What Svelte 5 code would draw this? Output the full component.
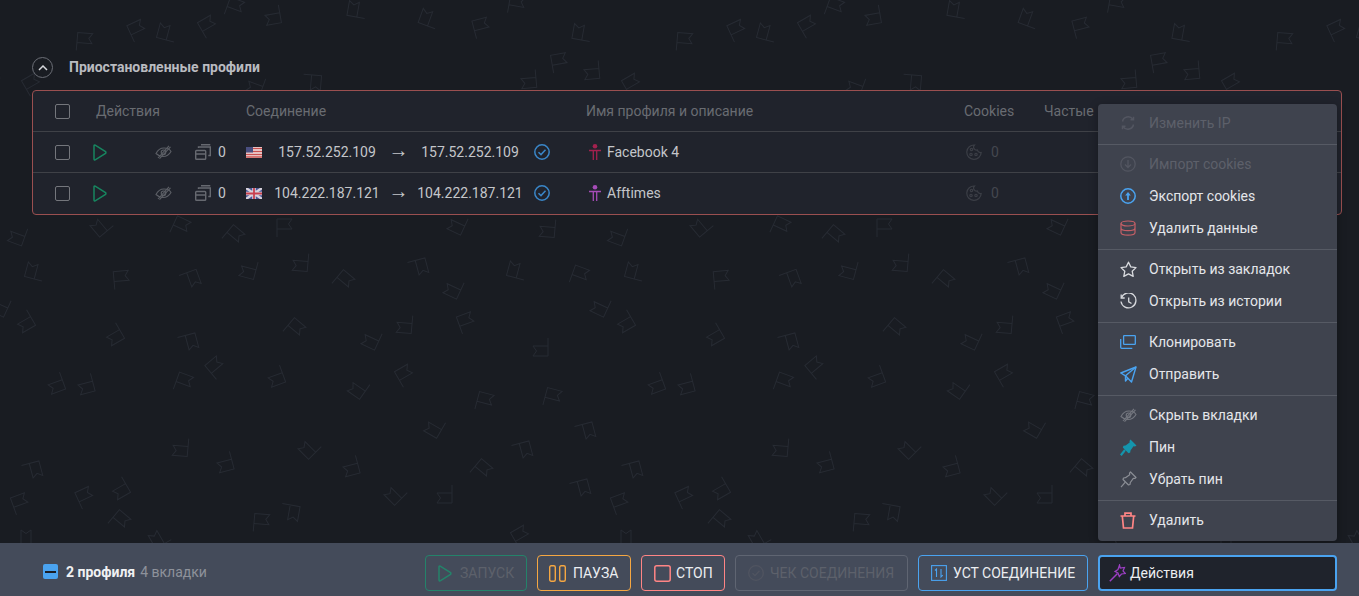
<script lang="ts">
	// background flags: one 600px wide tile, [x, y, rotation]
	const tile = [
		[458,224,205],[548,228,185],[618,235,200],[702,226,230],[780,227,25],[833,236,40],[884,228,0],
		[301,262,185],[418,267,75],[343,281,40],[454,288,205],[517,271,285],[579,276,20],[635,272,285],
		[721,280,-5],[790,279,70],[849,269,195],[601,306,205],[625,321,150],[294,329,40],[405,324,185],
		[466,323,-20],[372,339,205],[541,347,180],[714,334,150],[788,342,75],[816,368,320],[876,376,160],
		[783,383,20],[656,383,160],[686,384,165],[405,376,-30],[359,388,215],[484,402,15],[552,398,15],
		[435,427,210],[585,431,75],[310,448,225],[522,450,75],[351,466,165],[481,470,40],[632,470,75],
		[781,447,185],[825,462,165],[396,494,225],[445,494,180],[580,488,75],[620,504,-20],[685,498,-25],
		[720,488,150],[719,521,40],[861,523,5],[890,512,100],[521,537,-30],[630,538,270],[760,538,240],
		[234,8,20],[273,15,170],[137,31,-25],[167,33,285],[208,27,-30],[84,42,5],[357,10,280],[429,19,290],
		[481,28,-15],[516,5,10],[582,33,280],[559,63,-10],[592,70,175],[529,79,175],[312,82,95],[256,85,200],[32,85,-30]
	];
	const flags = tile.flatMap(([x, y, r]) =>
		[-600, 0, 600, 1200].map((dx) => [((x % 600) + dx), y, r])
	);

	const columns = ['Действия', 'Соединение', 'Имя профиля и описание', 'Cookies', 'Частые'];

	const profiles = [
		{ country: 'us', ip: '157.52.252.109', name: 'Facebook 4', color: '#a3214e' },
		{ country: 'uk', ip: '104.222.187.121', name: 'Afftimes', color: '#a64cb8' }
	];

	const menu = [
		[{ label: 'Изменить IP', icon: 'refresh', off: true }],
		[
			{ label: 'Импорт cookies', icon: 'down', off: true },
			{ label: 'Экспорт cookies', icon: 'up' },
			{ label: 'Удалить данные', icon: 'db' }
		],
		[
			{ label: 'Открыть из закладок', icon: 'star' },
			{ label: 'Открыть из истории', icon: 'history' }
		],
		[
			{ label: 'Клонировать', icon: 'clone' },
			{ label: 'Отправить', icon: 'send' }
		],
		[
			{ label: 'Скрыть вкладки', icon: 'eye' },
			{ label: 'Пин', icon: 'pin' },
			{ label: 'Убрать пин', icon: 'unpin' }
		],
		[{ label: 'Удалить', icon: 'trash' }]
	];
</script>

{#snippet eye(color)}
	<svg class="ic" width="17" height="14" viewBox="0 0 17 14" fill="none" stroke={color} stroke-width="1.100">
		<path d="M1 8.500C3 4.500 6 3 9 3s5.500 1 7 3.500C14 10 11.500 11.500 8 11.500S3 10.500 1 8.500Z" />
		<circle cx="8.500" cy="7.300" r="2.300" />
		<path d="M14 .8 3 13M15.500 1.800 4.500 13.600" />
	</svg>
{/snippet}

{#snippet menuIcon(name)}
	{#if name === 'refresh'}
		<svg class="ic" width="16" height="16" viewBox="0 0 16 16" fill="none" stroke="#535661" stroke-width="1.500">
			<path d="M2.500 6.500A5.700 5.700 0 0 1 12.800 4.300M13.500 9.500A5.700 5.700 0 0 1 3.200 11.700" />
			<path d="M13.500 1.800v3h-3M2.500 14.200v-3h3" />
		</svg>
	{:else if name === 'down'}
		<svg class="ic" width="16" height="16" viewBox="0 0 16 16" fill="none" stroke="#535661" stroke-width="1.300">
			<circle cx="8" cy="8" r="7.200" />
			<path d="M8 4v7.500M5 8.500l3 3 3-3" />
		</svg>
	{:else if name === 'up'}
		<svg class="ic" width="16" height="16" viewBox="0 0 16 16" fill="none" stroke="#4aa3f0" stroke-width="1.500">
			<circle cx="8" cy="8" r="7.200" />
			<path d="M8 12V6" stroke-width="1.800" />
			<path d="M5.200 7.500 8 4l2.800 3.500Z" fill="#4aa3f0" stroke="none" />
		</svg>
	{:else if name === 'db'}
		<svg class="ic" width="16" height="16" viewBox="0 0 16 16" fill="none" stroke="#c45f66" stroke-width="1.200">
			<ellipse cx="8" cy="3.500" rx="7" ry="2.500" />
			<path d="M1 3.500v9C1 14 4 15.200 8 15.200s7-1.200 7-2.700v-9M1 8c0 1.500 3 2.700 7 2.700S15 9.500 15 8" />
		</svg>
	{:else if name === 'star'}
		<svg class="ic" width="17" height="17" viewBox="0 0 17 17" fill="none" stroke="#d8dade" stroke-width="1.300" stroke-linejoin="round">
			<path d="M8.500 1.200 10.800 5.900 16 6.600 12.200 10.200 13.200 15.400 8.500 12.900 3.800 15.400 4.800 10.200 1 6.600 6.200 5.900Z" />
		</svg>
	{:else if name === 'history'}
		<svg class="ic" width="17" height="17" viewBox="0 0 17 17" fill="none" stroke="#d8dade" stroke-width="1.300">
			<path d="M1.500 4.500A7.500 7.500 0 1 1 1 8.500" />
			<path d="M1.200 1.500v3.500h3.500" />
			<path d="M8.700 4.500v4.300l2.800 1.700" />
		</svg>
	{:else if name === 'clone'}
		<svg class="ic" width="16" height="14" viewBox="0 0 16 14" fill="none" stroke="#4aa3f0" stroke-width="1.300">
			<rect x="3.600" y=".7" width="11.700" height="8.600" rx=".6" />
			<path d="M.7 4v8.300c0 .6.400 1 1 1h10.600" />
		</svg>
	{:else if name === 'send'}
		<svg class="ic" width="17" height="17" viewBox="0 0 17 17" fill="none" stroke="#4aa3f0" stroke-width="1.400" stroke-linejoin="round">
			<path d="M16 1 .8 7 5.500 9.800 11.500 16Z" />
			<path d="M16 1 5.500 9.800V15l2.500-3" />
		</svg>
	{:else if name === 'eye'}
		{@render eye('#74777f')}
	{:else if name === 'pin'}
		<svg class="ic" width="17" height="17" viewBox="0 0 17 17">
			<path d="M10.500.5 16.500 6.500 15 7.500 13.500 7.300 10.500 11.500 10.200 13.500 8.500 14.200 2.800 8.500 3.500 6.800 5.500 6.500 9.700 3.500 9.500 2Z" fill="#1495ad" />
			<path d="M5 11 .8 16.200" stroke="#1495ad" stroke-width="2.200" fill="none" />
		</svg>
	{:else if name === 'unpin'}
		<svg class="ic" width="17" height="17" viewBox="0 0 17 17" fill="none" stroke="#8b8e95" stroke-width="1.200" stroke-linejoin="round">
			<path d="M10.500 1 16 6.500 14.800 7.500 13.300 7.300 10.300 11.500 10 13.500 8.500 14 3 8.500 3.500 7 5.500 6.700 9.700 3.700 9.500 2.200Z" />
			<path d="M5.300 11.200 1 16.200" />
		</svg>
	{:else if name === 'trash'}
		<svg class="ic" width="16" height="17" viewBox="0 0 16 17" fill="none" stroke="#ff8585" stroke-width="1.700">
			<path d="M.5 4h15M5 4V1.200h6V4M2.300 4l1.200 12h9l1.200-12" />
		</svg>
	{/if}
{/snippet}

<div class="page">
	<svg class="pattern" width="1359" height="596" aria-hidden="true">
		<defs>
			<path id="flag" d="M-7 9V-9H8L4.500-4 8 1H-7" fill="none" stroke="#272b33" stroke-width="1" />
		</defs>
		{#each flags as [x, y, r]}
			<use href="#flag" transform="translate({x} {y}) rotate({r})" />
		{/each}
	</svg>

	<main class="content">
		<div class="section-head">
			<span class="collapse">
				<svg width="10" height="6" viewBox="0 0 10 6" fill="none" stroke="#d4d6da" stroke-width="1.500">
					<path d="M1 5l4-4 4 4" />
				</svg>
			</span>
			<span class="section-title">Приостановленные профили</span>
		</div>

		<div class="table">
			<div class="row head">
				<span class="box"></span>
				{#each columns as col}
					<span>{col}</span>
				{/each}
			</div>
			{#each profiles as p}
				<div class="row">
					<span class="box"></span>
					<div class="actions">
						<svg class="play" width="14" height="17" viewBox="0 0 14 17" fill="none" stroke="#17855f" stroke-width="1.500">
							<path d="M2.200 1.200 12.500 7.500Q13.300 8.500 12.500 9.500L2.200 15.800Q1 16.200 1 15V2Q1 .8 2.200 1.200Z" />
						</svg>
						{@render eye('#5c5f66')}
						<svg class="tabs" width="16" height="16" viewBox="0 0 16 16" fill="none" stroke="#666970" stroke-width="1.400">
							<rect x=".7" y="6.500" width="10" height="8.800" rx=".8" />
							<path d="M.7 10h10M3.500 4V3h11.800v8.500h-2M6 .8h9.300" />
						</svg>
						<span class="count">0</span>
					</div>
					<div class="conn">
						{#if p.country === 'us'}
							<svg class="flag" width="16" height="11" viewBox="0 0 16 11">
								<rect width="16" height="11" fill="#f0e6e6" />
								<path d="M0 1.500h16M0 4.500h16M0 7.500h16M0 10h16" stroke="#c9504f" stroke-width="1.500" />
								<rect width="7" height="5.500" fill="#4a4f80" />
							</svg>
						{:else}
							<svg class="flag" width="16" height="11" viewBox="0 0 16 11">
								<rect width="16" height="11" fill="#4a5596" />
								<path d="M0 0l16 11M16 0 0 11" stroke="#d8d2dc" stroke-width="2.400" />
								<path d="M8 0v11M0 5.500h16" stroke="#d8d2dc" stroke-width="3.600" />
								<path d="M8 0v11M0 5.500h16" stroke="#c8404f" stroke-width="1.800" />
							</svg>
						{/if}
						<span class="ip">{p.ip}</span>
						<span class="arrow">→</span>
						<span class="ip">{p.ip}</span>
						<svg class="check" width="16" height="16" viewBox="0 0 16 16" fill="none" stroke="#3a86c8" stroke-width="1.500">
							<circle cx="8" cy="8" r="7.200" />
							<path d="M4.500 8.200 7 10.600 11.500 5.800" />
						</svg>
					</div>
					<div class="name">
						<svg width="12" height="16" viewBox="0 0 12 16" fill="none" stroke={p.color} stroke-width="1.300">
							<circle cx="6" cy="2.300" r="2.300" fill={p.color} stroke="none" />
							<path d="M0 6.500h12M4.300 6.500V16M7.700 6.500V16" />
						</svg>
						<span>{p.name}</span>
					</div>
					<div class="cookies">
						<svg width="16" height="16" viewBox="0 0 16 16" fill="none" stroke="#3b3e46" stroke-width="1.200">
							<path d="M8.500 1A7.200 7.200 0 1 0 15.200 8.500 3 3 0 0 1 11.500 6 3 3 0 0 1 8.500 1Z" />
							<circle cx="5.500" cy="5.500" r="1.200" />
							<circle cx="5" cy="10.500" r="1.200" />
							<circle cx="10" cy="10.500" r="1.200" />
						</svg>
						<span>0</span>
					</div>
				</div>
			{/each}
		</div>
	</main>

	<div class="menu">
		{#each menu as group}
			<div class="group">
				{#each group as item}
					<div class="item" class:off={item.off}>
						<span class="slot">{@render menuIcon(item.icon)}</span>
						{item.label}
					</div>
				{/each}
			</div>
		{/each}
	</div>

	<footer class="bar">
		<div class="selected">
			<span class="minus"></span>
			<b>2 профиля</b>
			<span class="tabs-count">4 вкладки</span>
		</div>
		<div class="buttons">
			<button class="btn start">
				<svg width="14" height="17" viewBox="0 0 14 17" fill="none" stroke="#24836a" stroke-width="1.500">
					<path d="M2.200 1.200 12.500 7.500Q13.300 8.500 12.500 9.500L2.200 15.800Q1 16.200 1 15V2Q1 .8 2.200 1.200Z" />
				</svg>
				ЗАПУСК
			</button>
			<button class="btn pause">
				<svg width="17" height="17" viewBox="0 0 17 17" fill="none" stroke="#f5a742" stroke-width="1.400">
					<rect x=".7" y=".7" width="5.600" height="15.600" rx="1.500" />
					<rect x="10.700" y=".7" width="5.600" height="15.600" rx="1.500" />
				</svg>
				ПАУЗА
			</button>
			<button class="btn stop">
				<svg width="17" height="17" viewBox="0 0 17 17" fill="none" stroke="#ff8585" stroke-width="1.500">
					<rect x=".8" y=".8" width="15.400" height="15.400" rx="2" />
				</svg>
				СТОП
			</button>
			<button class="btn check-conn">
				<svg width="16" height="16" viewBox="0 0 16 16" fill="none" stroke="#505460" stroke-width="1.300">
					<circle cx="8" cy="8" r="7.300" />
					<path d="M4.500 8.200 7 10.600 11.500 5.800" />
				</svg>
				ЧЕК СОЕДИНЕНИЯ
			</button>
			<button class="btn set-conn">
				<svg width="16" height="16" viewBox="0 0 16 16" fill="none" stroke="#4aa3f0" stroke-width="1.100">
					<rect x=".6" y=".6" width="14.800" height="14.800" />
					<path d="M5.500 12V4L4 5.500M10 4v8l1.800-1.800" />
				</svg>
				УСТ СОЕДИНЕНИЕ
			</button>
			<button class="btn actions-btn">
				<svg width="17" height="18" viewBox="0 0 17 18" fill="none" stroke="#9c3fc4" stroke-width="1.200">
					<path d="M.8 17.200 8.500 9.500" stroke-width="1.500" />
					<path d="M10.500 1 11.200 4 15.500 3.500 14 7 16.300 9.500 12.500 10 10.300 12.500 9 9 6 7.500 9 5.500Z" />
				</svg>
				Действия
			</button>
		</div>
	</footer>
</div>

<style>
	:global(body) {
		margin: 0;
		background: #191c22;
	}

	.page {
		position: relative;
		height: 596px;
		overflow: hidden;
		display: flex;
		flex-direction: column;
		font-family: Roboto, 'Liberation Sans', sans-serif;
		font-size: 14px;
		color: #c4c6ca;
		background: #191c22;
	}

	.pattern {
		position: absolute;
		left: 0;
		top: 0;
	}

	.content {
		position: relative;
		flex: 1;
		padding: 57px 17px 0 32px;
	}

	.section-head {
		display: flex;
		align-items: center;
		gap: 16px;
		height: 21px;
		margin-bottom: 12px;
	}

	.collapse {
		width: 19px;
		height: 19px;
		border: 1px solid #6b6e76;
		border-radius: 50%;
		display: flex;
		align-items: center;
		justify-content: center;
	}

	.section-title {
		font-weight: 700;
		color: #b9bbc0;
		margin-top: -2px;
	}

	.table {
		background: #20232c;
		border: 1px solid #9a4f50;
		border-radius: 4px;
	}

	.row {
		display: grid;
		grid-template-columns: 41px 150px 340px 378px 80px 1fr;
		align-items: center;
		height: 40px;
		padding-left: 22px;
		border-bottom: 1px solid #3f4147;
	}

	.row:last-child {
		border-bottom: 0;
		padding-bottom: 1px;
	}

	.head {
		color: #696c72;
	}

	.box {
		width: 13px;
		height: 13px;
		border: 1px solid #74767c;
		border-radius: 2px;
	}

	.actions {
		display: flex;
		align-items: center;
		margin-left: -3px;
	}

	.actions .tabs {
		margin-left: 23px;
	}

	.actions :global(.ic) {
		margin-left: 48px;
	}

	.count {
		margin-left: 7px;
	}

	.conn {
		display: flex;
		align-items: center;
	}

	.flag {
		margin-right: 10px;
	}

	.ip {
		width: 110px;
		text-align: center;
		white-space: nowrap;
	}

	.arrow {
		width: 33px;
		margin-top: -5px;
		text-align: center;
		font-family: 'Liberation Sans', sans-serif;
		font-size: 20px;
		line-height: 20px;
	}

	.check {
		margin-left: 9px;
	}

	.name {
		display: flex;
		align-items: center;
		gap: 6px;
		padding-left: 3px;
	}

	.cookies {
		display: flex;
		align-items: center;
		gap: 9px;
		padding-left: 2px;
		color: #44474f;
	}

	.menu {
		position: absolute;
		left: 1098px;
		top: 104px;
		width: 239px;
		background: #3f434e;
		border-radius: 4px;
		box-shadow: 0 2px 10px rgba(0, 0, 0, 0.3);
	}

	.group {
		padding: 4px 0;
		border-top: 1px solid #565a64;
	}

	.group:first-child {
		border-top: 0;
	}

	.item {
		display: flex;
		align-items: center;
		height: 32px;
		box-sizing: border-box;
		padding: 0 0 2px 22px;
		color: #e4e6ea;
	}

	.item.off {
		color: #5d606a;
	}

	.slot {
		width: 29px;
		display: flex;
		align-items: center;
	}

	.bar {
		position: relative;
		height: 53px;
		flex-shrink: 0;
		background: #444b5a;
		display: flex;
		align-items: center;
		justify-content: space-between;
		padding: 0 22px 0 43px;
		box-sizing: border-box;
	}

	.selected {
		display: flex;
		align-items: center;
		gap: 4px;
		padding-top: 4px;
	}

	.selected b {
		color: #f0f1f3;
		margin-left: 4px;
	}

	.tabs-count {
		color: #8e929b;
		margin-left: 1px;
	}

	.minus {
		width: 15px;
		height: 15px;
		border-radius: 2px;
		background: #4aa3f0;
		display: flex;
		align-items: center;
		justify-content: center;
	}

	.minus::after {
		content: '';
		width: 11px;
		height: 2px;
		background: #1b1e26;
	}

	.buttons {
		display: flex;
		gap: 10px;
		padding-top: 12px;
		padding-bottom: 5px;
	}

	.btn {
		display: flex;
		align-items: center;
		gap: 8px;
		height: 36px;
		box-sizing: border-box;
		padding: 0 11px;
		border: 1px solid;
		border-radius: 4px;
		background: transparent;
		font: inherit;
		color: #eceef1;
		white-space: nowrap;
	}

	.btn svg {
		flex-shrink: 0;
	}

	.start {
		width: 102px;
		padding-left: 12px;
		border-color: #24836a;
		color: #5d616b;
	}

	.pause {
		width: 94px;
		gap: 7px;
		border-color: #f5a742;
	}

	.stop {
		width: 84px;
		padding-left: 12px;
		gap: 5px;
		border-color: #ff8585;
	}

	.check-conn {
		width: 173px;
		padding-left: 12px;
		gap: 6px;
		border-color: #5f6572;
		color: #5d616b;
	}

	.set-conn {
		width: 170px;
		padding-left: 12px;
		gap: 6px;
		border-color: #4aa3f0;
	}

	.actions-btn {
		width: 239px;
		gap: 4px;
		padding: 0 9px 1px;
		border: 2px solid #4aa3f0;
		background: #1f232c;
	}
</style>
